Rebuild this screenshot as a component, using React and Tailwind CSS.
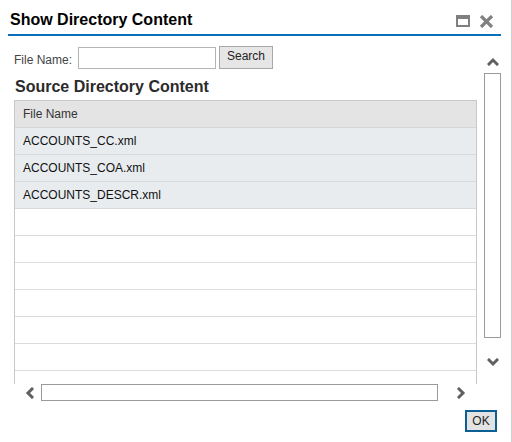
import React from "react";

const files = ["ACCOUNTS_CC.xml", "ACCOUNTS_COA.xml", "ACCOUNTS_DESCR.xml"];

function Chevron({ dir }) {
  const pts = {
    up: "2,7 6,3 10,7",
    down: "2,2 6,6 10,2",
    left: "7,2 3,6 7,10",
    right: "2,2 6,6 2,10",
  };
  const horiz = dir === "left" || dir === "right";
  return (
    <svg
      width={horiz ? 9 : 12}
      height={horiz ? 12 : 9}
      viewBox={horiz ? "0 0 9 12" : "0 0 12 9"}
      className="block"
    >
      <polyline
        points={pts[dir]}
        fill="none"
        stroke="#606060"
        strokeWidth="3"
        strokeLinecap="square"
        strokeLinejoin="miter"
      />
    </svg>
  );
}

export default function App() {
  return (
    <div className="w-[512px] h-[442px] bg-white border-r border-[#cfcfcf] flex flex-col font-['Liberation_Sans',Arial,sans-serif] text-[#333]">
      {/* Title bar */}
      <div className="ml-[8px] w-[493px] h-[36px] shrink-0 border-b-2 border-[#0a70b9] flex justify-between pl-[2px] pt-[11px]">
        <h1 className="text-[16px] leading-[18px] font-bold text-black">
          Show Directory Content
        </h1>
        <div className="flex items-start gap-[9px] mt-[4px] mr-[7px]">
          <div className="w-[14px] h-[12px] border-2 border-t-4 border-[#808080]"></div>
          <svg width="15" height="13" viewBox="0 0 15 13" className="block">
            <path d="M2 1 L13 12 M13 1 L2 12" stroke="#808080" strokeWidth="3.2" />
          </svg>
        </div>
      </div>

      {/* Scrolled content */}
      <div className="flex h-[348px] shrink-0">
        <div className="w-[484px] pl-[14px] pt-[10px] flex flex-col">
          <div className="flex items-center h-[23px]">
            <span className="text-[12px] leading-[14px] mt-[4px] text-[#444]">File Name:</span>
            <input
              type="text"
              className="ml-[6px] w-[138px] h-[22px] border border-[#b4b4b4] bg-white outline-none"
            />
            <button className="ml-[3px] w-[54px] h-[23px] border border-[#a8a8a8] bg-[#e6e6e6] text-[12px] leading-[14px] text-[#222] pb-[3px]">
              Search
            </button>
          </div>
          <h2 className="mt-[9px] ml-[1px] text-[16px] leading-[18px] font-bold text-[#2b2b2b]">
            Source Directory Content
          </h2>
          <div className="mt-[4px] w-[463px] flex-1 border-x border-t border-[#c8c8c8] overflow-hidden">
            <div className="h-[27px] bg-[#e4e4e4] border-b border-[#d6d6d6] flex items-center pl-[8px] text-[12px] text-[#333]">
              File Name
            </div>
            {files.map((f) => (
              <div
                key={f}
                className="h-[27px] bg-[#e8ecef] border-b border-[#d9d9d9] flex items-center pl-[8px] text-[12px] text-[#111]"
              >
                {f}
              </div>
            ))}
            {[1, 2, 3, 4, 5, 6, 7].map((i) => (
              <div key={i} className="h-[27px] border-b border-[#dcdcdc]"></div>
            ))}
          </div>
        </div>

        {/* Vertical scrollbar */}
        <div className="w-[17px] flex flex-col items-center">
          <div className="mt-[21px]">
            <Chevron dir="up" />
          </div>
          <div className="mt-[7px] w-[17px] h-[265px] border border-[#9a9a9a]"></div>
          <div className="mt-[20px]">
            <Chevron dir="down" />
          </div>
        </div>
      </div>

      {/* Horizontal scrollbar */}
      <div className="h-[17px] shrink-0 flex items-center pl-[25px]">
        <Chevron dir="left" />
        <div className="ml-[7px] w-[397px] h-[17px] border border-[#9a9a9a]"></div>
        <div className="ml-[19px]">
          <Chevron dir="right" />
        </div>
      </div>

      {/* Footer */}
      <div className="flex justify-end pr-[14px] mt-[9px]">
        <button className="w-[32px] h-[22px] border-2 border-[#0c5f92] bg-[#e3e3e3] text-[12px] leading-[14px] text-[#222]">
          OK
        </button>
      </div>
    </div>
  );
}
